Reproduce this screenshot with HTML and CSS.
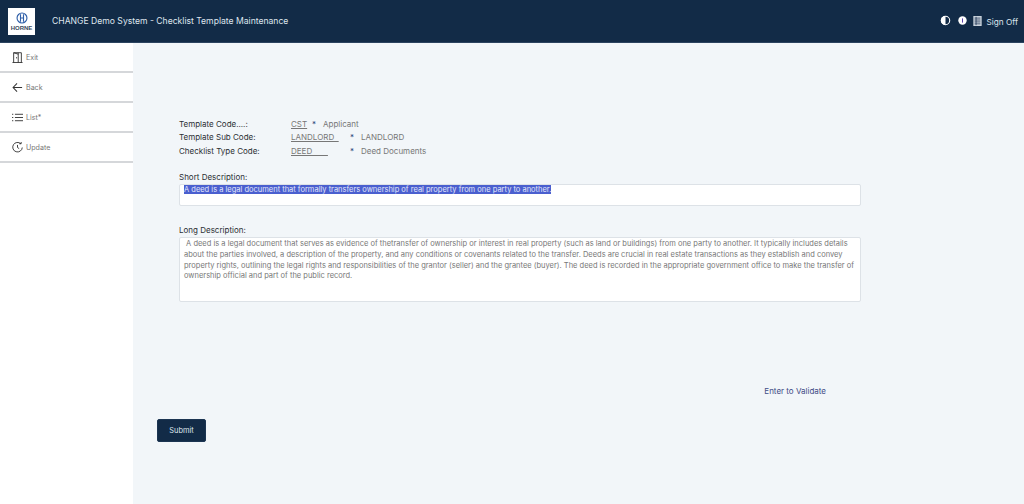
FILE: index.html
```html
<!DOCTYPE html>
<html lang="en">
<head>
<meta charset="utf-8">
<title>Checklist Template Maintenance</title>
<link rel="stylesheet" href="styles.css">
</head>
<body>
<header class="topbar">
  <div class="logo">
    <svg class="logo-mark" viewBox="0 0 16 16" width="15" height="15" fill="none" stroke="#2f5fa8" stroke-width="1.5"><circle cx="8" cy="8" r="6.6"/><path d="M6 3v10M10 3v10M6 8h4"/></svg>
    <span class="logo-text">HORNE</span>
  </div>
  <h1 class="title">CHANGE Demo System - Checklist Template Maintenance</h1>
  <div class="tools">
    <svg viewBox="0 0 12 12" width="11" height="11"><circle cx="6" cy="6" r="4.6" fill="none" stroke="#fff" stroke-width="1.2"/><path d="M6 1a5 5 0 0 0 0 10z" fill="#fff"/></svg>
    <svg class="tool-info" viewBox="0 0 12 12" width="9" height="9"><circle cx="6" cy="6" r="5.6" fill="#fff"/><path d="M6 3.2v5.6" stroke="#5b3fa8" stroke-width="1.4"/></svg>
    <svg class="tool-doc" viewBox="0 0 10 12" width="9" height="10"><rect width="10" height="12" fill="#c9d2dc"/><path d="M1.5 2.5h7M1.5 4.8h7M1.5 7.1h7M1.5 9.4h7M3.3 1v10" stroke="#12294a" stroke-width=".8"/></svg>
    <span class="signoff">Sign Off</span>
  </div>
</header>
<div class="shell">
  <nav class="sidebar">
    <a class="nav-item">
      <svg viewBox="0 0 12 12" width="11" height="11" fill="none" stroke="#333" stroke-width="1"><path d="M.5 11.5h11M1.8 11.5V.8h8.4v10.7"/><path d="M6.8 .8v10.7M1.8 .8l5 1.6"/><path d="M5 5.6v1.4"/></svg>
      <span>Exit</span>
    </a>
    <a class="nav-item">
      <svg viewBox="0 0 12 12" width="11" height="11" fill="none" stroke="#333" stroke-width="1.1"><path d="M11 6H1.2M5.5 1.6 1.2 6l4.3 4.4"/></svg>
      <span>Back</span>
    </a>
    <a class="nav-item">
      <svg viewBox="0 0 12 12" width="11" height="11" fill="none" stroke="#333" stroke-width="1"><path d="M3.2 2.5H12M3.2 6H12M3.2 9.5H12M0 2.5h1.4M0 6h1.4M0 9.5h1.4"/></svg>
      <span>List*</span>
    </a>
    <a class="nav-item">
      <svg viewBox="0 0 12 12" width="11" height="11" fill="none" stroke="#333" stroke-width="1"><path d="M9.6 1.9A5.2 5.2 0 1 0 11.2 6"/><path d="M6 3.2V6l1.8 1.2M8 1.9h2V0"/></svg>
      <span>Update</span>
    </a>
  </nav>
  <main class="content">
    <form class="form">
      <div class="codes">
        <div class="code-row"><span class="label">Template Code....:</span><span class="code code-cst">CST</span><span class="star">*</span><span class="value">Applicant</span></div>
        <div class="code-row"><span class="label">Template Sub Code:</span><span class="code code-wide">LANDLORD&nbsp;&nbsp;</span><span class="star">*</span><span class="value">LANDLORD</span></div>
        <div class="code-row"><span class="label">Checklist Type Code:</span><span class="code code-wide">DEED&nbsp;&nbsp;&nbsp;&nbsp;&nbsp;&nbsp;&nbsp;</span><span class="star">*</span><span class="value">Deed Documents</span></div>
      </div>
      <label class="field-label">Short Description:</label>
      <div class="box box-short"><span class="selected">A deed is a legal document that formally transfers ownership of real property from one party to another.</span></div>
      <label class="field-label field-long">Long Description:</label>
      <div class="box box-long">&nbsp;A deed is a legal document that serves as evidence of thetransfer of ownership or interest in real property (such as land or buildings) from one party to another. It typically includes details about the parties involved, a description of the property, and any conditions or covenants related to the transfer. Deeds are crucial in real estate transactions as they establish and convey property rights, outlining the legal rights and responsibilities of the grantor (seller) and the grantee (buyer). The deed is recorded in the appropriate government office to make the transfer of ownership official and part of the public record.</div>
      <div class="validate-row"><a class="validate">Enter to Validate</a></div>
    </form>
    <button class="submit" type="button">Submit</button>
  </main>
</div>
</body>
</html>
```
FILE: styles.css
```css
* { box-sizing: border-box; }
html, body { margin: 0; height: 100%; overflow: hidden; }
body { font-family: Inter, "Liberation Sans", sans-serif; font-size: 8px; background: #f2f6f9; color: #5f6368; display: flex; flex-direction: column; }
.topbar { height: 43px; flex: none; background: #122b47; display: flex; align-items: center; padding: 0 6px 0 8px; border-bottom: 1px solid #2c4460; }
.logo { width: 27px; height: 27px; background: #fff; display: flex; flex-direction: column; align-items: center; padding-top: 4px; gap: 1px; }
.logo-mark { display: block; width: 12px; height: 12px; }
.logo-text { font-family: "Liberation Sans", sans-serif; font-size: 6px; font-weight: 700; color: #3a4a5c; line-height: 7px; }
.title { margin: 0 0 0 17px; font-size: 8.6px; font-weight: 400; color: #dfe6ee; flex: 1; }
.tools { display: flex; align-items: center; gap: 6px; color: #dfe6ee; margin-top: -1px; }
.tool-info { margin-left: 1px; }
.signoff { font-size: 8.2px; margin-left: -1px; padding-top: 3px; }
.shell { flex: 1; display: flex; min-height: 0; }
.sidebar { width: 133px; flex: none; background: #fff; }
.nav-item { height: 30px; display: flex; align-items: center; gap: 3px; padding: 1px 0 0 12px; border-bottom: 2px solid #d5d7da; color: #777; font-size: 7.1px; }
.content { flex: 1; padding: 74px 0 0 24px; min-width: 0; }
.form { width: 704px; padding-left: 22px; }
.codes { display: flex; flex-direction: column; }
.code-row { display: flex; height: 13.5px; align-items: center; }
.label { width: 112px; color: #2b2f33; }
.code { color: #777; text-decoration: underline; white-space: pre; }
.code-cst { width: 21px; }
.code-wide { width: 59px; }
.star { width: 11px; color: #2a3f7a; }
.value { color: #777; }
.field-label { display: block; color: #2b2f33; margin-top: 13.5px; line-height: 13px; }
.field-long { margin-top: 18px; }
.box { background: #fff; border: 1px solid #dde2e7; border-radius: 2px; width: 682px; color: #777; padding: 0 4px; font-size: 7.5px; }
.box-short { height: 22px; line-height: 10px; }
.box-long { height: 65px; line-height: 10.8px; padding: 1px 4px 0 4px; }
.selected { background: #4a5fcf; color: #e3e7fb; }
.validate-row { margin-top: 84px; text-align: right; padding-right: 35px; }
.validate { color: #3f4b86; }
.submit { display: block; margin-top: 23px; width: 49px; height: 23px; background: #122b47; color: #dfe6ee; border: 1px solid #1c3552; border-radius: 2px; font-family: inherit; font-size: 7.4px; padding: 0; }
```
